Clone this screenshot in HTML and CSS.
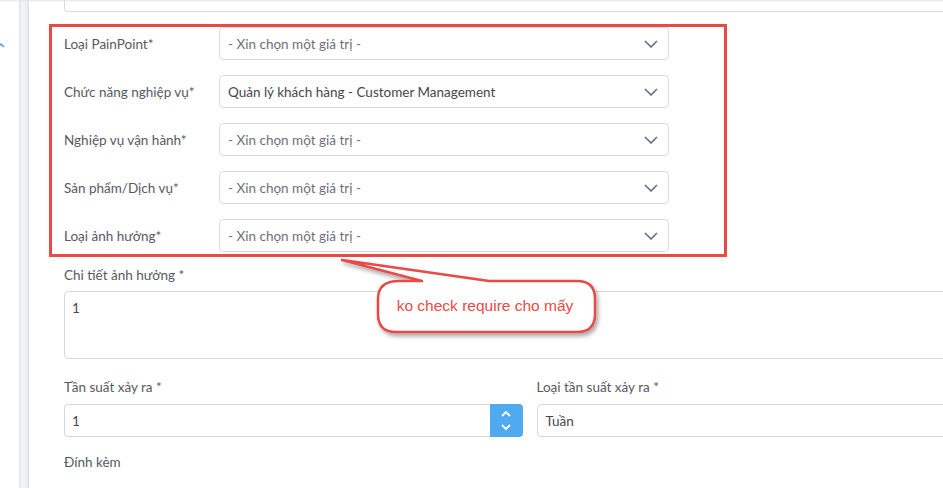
FILE: index.html
```html
<!DOCTYPE html>
<html lang="vi">
<head>
<meta charset="utf-8">
<title>PainPoint</title>
<link rel="stylesheet" href="styles.css">
</head>
<body>
<div class="page">
  <aside class="sidebar">
    <svg class="side-icon" width="6" height="8" viewBox="0 0 6 8"><path d="M-3 6 L1 2 L4 5" fill="none" stroke="#4a9fe8" stroke-width="1.5"/></svg>
  </aside>
  <div class="rail"></div>
  <main class="main">
    <div class="top-input"></div>

    <div class="highlight">
      <div class="row">
        <label class="label">Loại PainPoint*</label>
        <div class="select placeholder">- Xin chọn một giá trị -<svg class="chev" width="14" height="8" viewBox="0 0 14 8"><path d="M1 1 L7 7 L13 1" fill="none" stroke="#5b6b80" stroke-width="1.5"/></svg></div>
      </div>
      <div class="row">
        <label class="label">Chức năng nghiệp vụ*</label>
        <div class="select">Quản lý khách hàng - Customer Management<svg class="chev" width="14" height="8" viewBox="0 0 14 8"><path d="M1 1 L7 7 L13 1" fill="none" stroke="#5b6b80" stroke-width="1.5"/></svg></div>
      </div>
      <div class="row">
        <label class="label">Nghiệp vụ vận hành*</label>
        <div class="select placeholder">- Xin chọn một giá trị -<svg class="chev" width="14" height="8" viewBox="0 0 14 8"><path d="M1 1 L7 7 L13 1" fill="none" stroke="#5b6b80" stroke-width="1.5"/></svg></div>
      </div>
      <div class="row">
        <label class="label">Sản phẩm/Dịch vụ*</label>
        <div class="select placeholder">- Xin chọn một giá trị -<svg class="chev" width="14" height="8" viewBox="0 0 14 8"><path d="M1 1 L7 7 L13 1" fill="none" stroke="#5b6b80" stroke-width="1.5"/></svg></div>
      </div>
      <div class="row">
        <label class="label">Loại ảnh hưởng*</label>
        <div class="select placeholder">- Xin chọn một giá trị -<svg class="chev" width="14" height="8" viewBox="0 0 14 8"><path d="M1 1 L7 7 L13 1" fill="none" stroke="#5b6b80" stroke-width="1.5"/></svg></div>
      </div>

      <div class="callout">
        <svg width="290" height="100" viewBox="0 0 290 100">
          <defs>
            <filter id="sh" x="-10%" y="-20%" width="130%" height="160%">
              <feDropShadow dx="2" dy="3" stdDeviation="2" flood-color="#000" flood-opacity="0.35"/>
            </filter>
          </defs>
          <path d="M70 32 L93 32 L13 11 L160 32 L248 32 Q266 32 266 50 L266 65 Q266 83 248 83 L67 83 Q49 83 49 65 L49 50 Q49 32 70 32 Z" fill="#fff" stroke="#e84b46" stroke-width="2.5" stroke-linejoin="round" filter="url(#sh)"/>
          <text x="156" y="62" text-anchor="middle" class="callout-text">ko check require cho mấy</text>
        </svg>
      </div>
    </div>

    <div class="field-label first">Chi tiết ảnh hưởng *</div>
    <div class="textarea">1</div>

    <div class="cols">
      <div class="col">
        <div class="field-label">Tần suất xảy ra *</div>
        <div class="number">
          <div class="number-value">1</div>
          <div class="spin">
            <svg width="10" height="7" viewBox="0 0 10 7"><path d="M1 6 L5 2 L9 6" fill="none" stroke="#fff" stroke-width="1.8"/></svg>
            <svg width="10" height="7" viewBox="0 0 10 7"><path d="M1 1 L5 5 L9 1" fill="none" stroke="#fff" stroke-width="1.8"/></svg>
          </div>
        </div>
      </div>
      <div class="col">
        <div class="field-label">Loại tần suất xảy ra *</div>
        <div class="input">Tuần</div>
      </div>
    </div>

    <div class="field-label attach">Đính kèm</div>
  </main>
</div>
</body>
</html>
```
FILE: styles.css
```css
* { box-sizing: border-box; }
html, body {
  margin: 0;
  padding: 0;
  background: #fff;
  overflow: hidden;
}
body {
  font-family: Lato, "Open Sans", sans-serif;
  font-size: 13.5px;
  color: #575962;
  width: 943px;
  height: 488px;
}
.page {
  display: flex;
  height: 488px;
  position: relative;
  overflow: hidden;
}
.page::before {
  content: "";
  position: absolute;
  left: 0; right: 0; top: 0;
  height: 2px;
  background: linear-gradient(#e4e5e8, rgba(255,255,255,0));
}
.sidebar {
  width: 19px;
  flex: none;
  padding-top: 42px;
}
.side-icon { display: block; }
.rail {
  width: 10px;
  flex: none;
  background: linear-gradient(to right, #e4e5e8, #f3f4f6 35%, #eff0f2 70%, #dcdee2);
}
.main {
  flex: none;
  width: 914px;
  padding-left: 35px;
  overflow: hidden;
}
.top-input {
  height: 12px;
  border: 1px solid #d7dade;
  border-top: none;
  border-radius: 0 0 4px 4px;
  width: 931px;
}
.highlight {
  position: relative;
  margin-top: 12px;
  margin-left: -15px;
  width: 678px;
  border: 3px solid #e84b46;
  padding: 0 55px 2px 12px;
  display: flex;
  flex-direction: column;
  gap: 15px;
}
.row {
  display: flex;
  align-items: center;
  height: 33px;
}
.label {
  width: 155px;
  flex: none;
  color: #575962;
}
.select {
  flex: none;
  width: 450px;
  height: 33px;
  border: 1px solid #d5d9de;
  border-radius: 4px;
  display: flex;
  align-items: center;
  padding-left: 8px;
  position: relative;
  color: #45474d;
}
.select.placeholder { color: #6f7177; }
.chev {
  position: absolute;
  right: 10px;
  top: 12px;
}
.callout {
  position: absolute;
  left: 277px;
  top: 222px;
  width: 290px;
  height: 100px;
  z-index: 2;
}
.callout svg { display: block; overflow: visible; }
.callout-text {
  font-family: "Liberation Sans", Arial, sans-serif;
  font-size: 15.5px;
  fill: #e84b46;
}
.field-label {
  line-height: 20px;
  color: #575962;
}
.field-label.first { margin-top: 8px; }
.textarea {
  margin-top: 6px;
  width: 931px;
  height: 68px;
  border: 1px solid #d5d9de;
  border-radius: 4px;
  padding: 8px 7px;
  color: #45474d;
}
.cols {
  display: flex;
  gap: 14px;
  margin-top: 18px;
  width: 931px;
}
.col { flex: 1; }
.number {
  margin-top: 7px;
  display: flex;
  height: 33px;
}
.number-value {
  flex: 1;
  border: 1px solid #d5d9de;
  border-right: none;
  border-radius: 4px 0 0 4px;
  display: flex;
  align-items: center;
  padding-left: 7px;
  color: #45474d;
}
.spin {
  width: 33px;
  background: #4faaf0;
  border-radius: 0 4px 4px 0;
  display: flex;
  flex-direction: column;
  align-items: center;
  justify-content: center;
  gap: 7px;
}
.spin svg { display: block; }
.input {
  margin-top: 7px;
  height: 33px;
  border: 1px solid #d5d9de;
  border-radius: 4px;
  display: flex;
  align-items: center;
  padding-left: 8px;
  color: #45474d;
}
.field-label.attach { margin-top: 15px; }
```
